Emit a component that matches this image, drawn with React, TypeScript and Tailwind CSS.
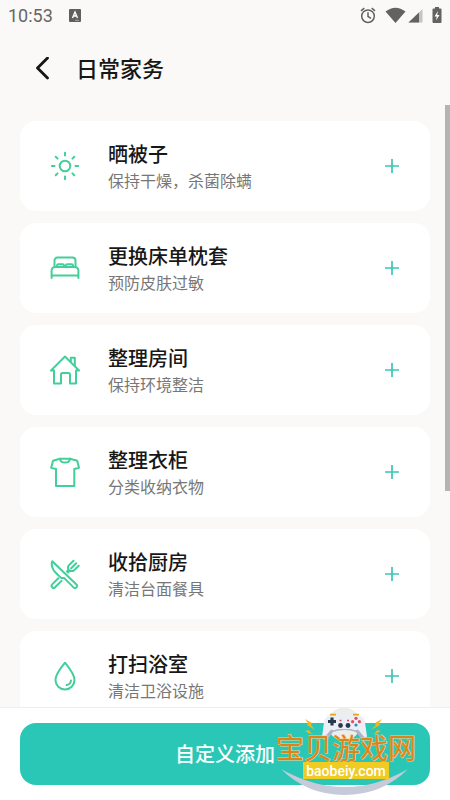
import React from "react";

interface Chore {
  id: string;
  title: string;
  desc: string;
  icon: React.ReactNode;
}

interface ChoreItemProps {
  chore: Chore;
}

const SunIcon = () => (
  <>
    <circle cx="15" cy="15" r="5.3" />
    <path d="M15 1.800v2.700M15 25.500v2.700M1.800 15h2.700M25.500 15h2.700M5.700 5.700l1.900 1.900M22.400 22.400l1.900 1.900M5.700 24.300l1.900-1.900M22.400 7.600l1.900-1.900" />
  </>
);

const BedIcon = () => (
  <>
    <path d="M4.500 14V7.500a3 3 0 0 1 3-3h15a3 3 0 0 1 3 3V14" />
    <path d="M1.600 25v-7.500a3.500 3.500 0 0 1 3.500-3.500h19.800a3.500 3.500 0 0 1 3.500 3.500V25M1.600 22.500h26.800" />
    <path d="M7 13.300v-.8a1.300 1.300 0 0 1 1.300-1.300h4.400a1.300 1.300 0 0 1 1.300 1.300v.8M16 13.300v-.8a1.300 1.300 0 0 1 1.300-1.300h4.400a1.300 1.300 0 0 1 1.300 1.300v.8" />
  </>
);

const HouseIcon = () => (
  <>
    <path d="M4 15.500H1L15 1.500l14 14h-3v13h-6v-9a1.500 1.500 0 0 0-1.500-1.500h-6a1.500 1.500 0 0 0-1.500 1.500v9H4Z" />
    <path d="M20.800 7V2.800h4v8" />
  </>
);

const ShirtIcon = () => (
  <>
    <path d="M10 1.800 3 3.800 1.200 10.800l4.800 1.200v17h18.300v-17l4.700-1.200-1.800-7-7.200-2Z" />
    <path d="M10 1.800c.6 5 9.400 5 10 0" />
  </>
);

const CutleryIcon = () => (
  <>
    <path d="M2.300 2.200c-1.500 3.600.3 9.300 4 12.200 2 1.600 3.800 4 5.200 4.600l2.500-.1 9.500 9.500a2 2 0 0 0 2.900-2.900Z" />
    <path d="m8.300 19.300-6.100 6.100a2 2 0 0 0 2.900 2.900l6.400-6.400" />
    <path d="m23.500 1.700-4.700 4.700c-1.200 1.500-1 2.800-.3 4L17 12.500M28.700 6.700 24 11.400c-1.500 1-2.800.8-4 .2l-2 2M26.200 4.200l-5 5" />
  </>
);

const DropIcon = () => (
  <>
    <path d="M15 1.700C11.500 6 5.500 13 5.500 19a9.500 9.500 0 0 0 19 0c0-6-6-13-9.500-17.300Z" />
    <path d="M21 19.500c-.3 2.600-2 4.200-4.400 4.600" />
  </>
);

const chores: Chore[] = [
  { id: "quilt", title: "晒被子", desc: "保持干燥，杀菌除螨", icon: <SunIcon /> },
  { id: "bed", title: "更换床单枕套", desc: "预防皮肤过敏", icon: <BedIcon /> },
  { id: "room", title: "整理房间", desc: "保持环境整洁", icon: <HouseIcon /> },
  { id: "closet", title: "整理衣柜", desc: "分类收纳衣物", icon: <ShirtIcon /> },
  { id: "kitchen", title: "收拾厨房", desc: "清洁台面餐具", icon: <CutleryIcon /> },
  { id: "bath", title: "打扫浴室", desc: "清洁卫浴设施", icon: <DropIcon /> },
];

const StatusBar = () => (
  <div className="flex h-8 shrink-0 items-center justify-between px-2 text-[#666]">
    <div className="flex items-center gap-4">
      <span className="font-[Roboto] text-lg leading-6">10:53</span>
      <svg className="h-3.5 w-3" viewBox="0 0 12 14" aria-hidden="true">
        <rect width="12" height="13" rx="1" fill="#5f5f5f" />
        <path d="m3.500 9 2.500-6 2.500 6M4.400 7h3.200" fill="none" stroke="#fff" strokeWidth="1.400" />
        <path d="M6 11.300h4" stroke="#bbb" strokeWidth=".8" />
      </svg>
    </div>
    <svg className="h-5 w-21" viewBox="0 0 84 20" aria-hidden="true">
      <g fill="none" stroke="#626262" strokeWidth="1.500">
        <circle cx="10" cy="10.200" r="6.300" />
        <path d="M10 6.200v4.300l3 1.800M3 4.800l3.300-2.700M17 4.800l-3.300-2.700" />
      </g>
      <path d="M27.500 5.500q10-7.600 20 0L37.500 17Z" fill="#626262" />
      <path d="M64.500 3v13.500h-14Z" fill="#c4c4c4" />
      <path d="M61 6.500v10H50.500Z" fill="#626262" />
      <path d="M77 1h4v1.500h1.500q1 0 1 1V16q0 1-1 1h-7q-1 0-1-1V3.500q0-1 1-1H77Z" fill="#626262" />
      <path d="m80 5-3.500 5.500h2.300L78 14.500 81.500 9h-2.300Z" fill="#fff" />
    </svg>
  </div>
);

const ChoreItem: React.FC<ChoreItemProps> = ({ chore }) => {
  return (
    <li className="flex h-[90px] shrink-0 items-center rounded-2xl bg-white pl-[30px] pr-6">
      <svg
        className="h-[30px] w-[30px] shrink-0"
        viewBox="0 0 30 30"
        fill="none"
        stroke="#43cf9a"
        strokeWidth="2"
        strokeLinecap="round"
        strokeLinejoin="round"
        aria-hidden="true"
      >
        {chore.icon}
      </svg>
      <div className="ml-7 flex-1">
        <h2 className="text-xl leading-7 font-medium text-[#171717]">{chore.title}</h2>
        <p className="text-base leading-6 text-[#777]">{chore.desc}</p>
      </div>
      <button type="button" aria-label={`添加${chore.title}`} className="p-1.5">
        <svg className="h-4 w-4" viewBox="0 0 16 16" stroke="#3cc6b5" strokeWidth="1.700">
          <path d="M8 1v14M1 8h14" />
        </svg>
      </button>
    </li>
  );
};

// Site badge that floats over the bottom bar
const SiteBadge = () => (
  <div className="pointer-events-none absolute right-[33px] bottom-0 h-[94px] w-[142px]">
    <svg className="absolute inset-0 h-full w-full" viewBox="0 0 142 94" aria-hidden="true">
      <circle cx="69" cy="18" r="16.500" fill="#ededed" />
      <path d="M6 63q64 36 127 0-26 26-63.500 26T6 63Z" fill="#c6cad9" />
      <path d="M55 11h29q4 1 5 6l2 15q-1 4-5 1l-5-7q-11-4-23 0l-5 7q-4 3-5-1l2-15q1-5 5-6Z" fill="#aeb3c6" />
      <path d="M55 9.500h29q5 1 6 7l2 14q-2 2-4-1l-5-6q-3 1.500-7-.5H63q-4 2-7 .5l-5 6q-2 3-4 1l2-14q1-6 6-7Z" fill="#eceef5" />
      <path d="M55 8.700h6M78 8.700h6" stroke="#e9a720" strokeWidth="1.800" />
      <path d="M57 11.500v8M53 15.500h8" stroke="#28394f" strokeWidth="3.200" />
      <circle cx="65.500" cy="19.500" r="2.400" fill="#28394f" />
      <circle cx="73" cy="19.500" r="2.400" fill="#28394f" />
      <path d="M64.500 14.500h2M72 14.500h2" stroke="#d54c65" strokeWidth="1.500" />
      <circle cx="81" cy="12.300" r="1.600" fill="#e04e5d" />
      <circle cx="81" cy="19" r="1.600" fill="#268fc0" />
      <circle cx="77.600" cy="15.700" r="1.600" fill="#e04e5d" />
      <circle cx="84.400" cy="15.700" r="1.600" fill="#e04e5d" />
      <path d="m30 13 7 4-1 2 4 5-8-5 1-2ZM107 13l-7 4 1 2-5 5 9-5-1-2ZM30 25l4-1 1 2 3 2-5-1-1-1ZM106 25l-4-1-1 2-3 2 5-1 1-1Z" fill="#f2b51c" />
    </svg>
    <div className="relative flex flex-col items-center gap-px pt-[27px]">
      <p className="text-[28px] leading-7 whitespace-nowrap text-[#dd8419] [-webkit-text-stroke:1px_#f3d48f] [paint-order:stroke_fill]">
        宝贝游戏网
      </p>
      <p className="flex h-[17px] w-[86px] items-center justify-center bg-[#f0cb22] font-[Roboto] text-sm leading-4 font-medium text-white">
        baobeiy.com
      </p>
    </div>
  </div>
);

const App: React.FC = () => {
  return (
    <div className="relative flex h-screen flex-col overflow-hidden bg-[#faf9f7] font-['Noto_Sans_CJK_SC',sans-serif]">
      <StatusBar />
      <header className="flex h-[73px] shrink-0 items-center gap-6 pl-8">
        <button type="button" aria-label="返回">
          <svg
            className="h-6 w-5"
            viewBox="0 0 20 24"
            fill="none"
            stroke="#151515"
            strokeWidth="2.800"
            strokeLinecap="round"
            strokeLinejoin="round"
          >
            <path d="M15.500 1 5.500 11l10 10" />
          </svg>
        </button>
        <h1 className="pb-1 text-[22px] leading-8 font-medium text-[#171717]">日常家务</h1>
      </header>
      <main className="relative min-h-0 flex-1 overflow-hidden">
        <ul className="flex flex-col gap-3 px-5 pt-4">
          {chores.map((chore) => (
            <ChoreItem key={chore.id} chore={chore} />
          ))}
        </ul>
        <div className="absolute top-0 right-0 h-[386px] w-[5px] bg-[#b4b4b4]" />
      </main>
      <footer className="shrink-0 border-t border-[#eeeeec] bg-white px-5 pt-[15px] pb-[15px]">
        <button
          type="button"
          className="h-[62px] w-full rounded-2xl bg-[#2bc7b6] text-xl font-medium text-white"
        >
          自定义添加
        </button>
      </footer>
      <SiteBadge />
    </div>
  );
};

export default App;
